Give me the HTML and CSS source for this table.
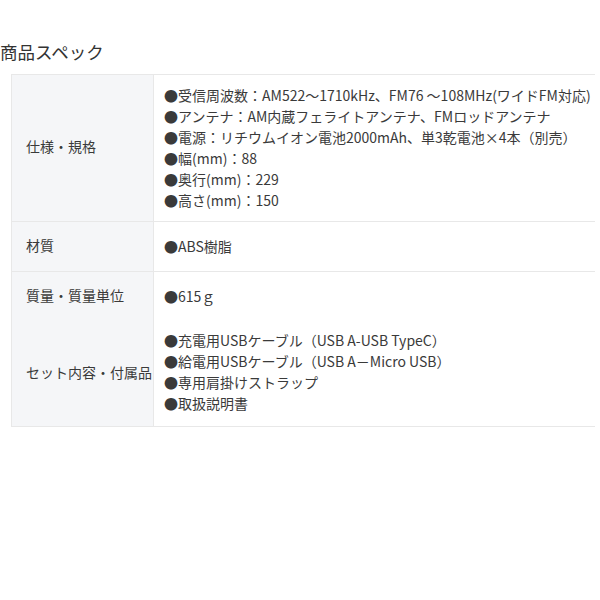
FILE: index.html
```html
<!DOCTYPE html>
<html lang="ja">
<head>
<meta charset="UTF-8" />
<meta name="viewport" content="width=device-width, initial-scale=1.0">
<title>商品スペック</title>
<link rel="stylesheet" href="styles.css">
</head>
<body>
<h2 class="spec-title">商品スペック</h2>
<table class="spec-table">
  <tr class="row-main">
    <th>仕様・規格</th>
    <td>
      ●受信周波数：AM522〜1710kHz、FM76 〜108MHz(ワイドFM対応)<br>
      ●アンテナ：AM内蔵フェライトアンテナ、FMロッドアンテナ<br>
      ●電源：リチウムイオン電池2000mAh、単3乾電池×4本（別売）<br>
      ●幅(mm)：88<br>
      ●奥行(mm)：229<br>
      ●高さ(mm)：150
    </td>
  </tr>
  <tr class="row-single">
    <th>材質</th>
    <td>●ABS樹脂</td>
  </tr>
  <tr class="row-single no-border">
    <th>質量・質量単位</th>
    <td>●615ｇ</td>
  </tr>
  <tr class="row-set">
    <th>セット内容・付属品</th>
    <td>
      ●充電用USBケーブル（USB A-USB TypeC）<br>
      ●給電用USBケーブル（USB A－Micro USB）<br>
      ●専用肩掛けストラップ<br>
      ●取扱説明書
    </td>
  </tr>
</table>
</body>
</html>
```

FILE: styles.css
```css
body {
  margin: 0;
  font-family: "Noto Sans CJK JP", "Noto Sans", sans-serif;
  color: #333;
  background: #fff;
}

.spec-title {
  margin: 40px 0 10px;
  font-size: 17.5px;
  font-weight: normal;
  line-height: 24px;
  color: #333;
}

.spec-table {
  margin-left: 11px;
  width: 584px;
  border-collapse: collapse;
  font-size: 14px;
  line-height: 21px;
  color: #3a3a3a;
  border-top: 1px solid #e8e8e8;
}

.spec-table tr {
  border-bottom: 1px solid #e8e8e8;
}

.spec-table tr.no-border {
  border-bottom: none;
}

.spec-table th {
  width: 127px;
  padding: 0 0 3px 14px;
  text-align: left;
  font-weight: normal;
  background: #f5f6f8;
  border-left: 1px solid #e8e8e8;
  border-right: 1px solid #e8e8e8;
  white-space: nowrap;
}

.spec-table td {
  padding: 10px 0 10px 10px;
  white-space: nowrap;
}

.row-single td {
  padding: 14px 0 14px 10px;
}

.row-set td {
  padding: 9px 0 12px 10px;
}
```
